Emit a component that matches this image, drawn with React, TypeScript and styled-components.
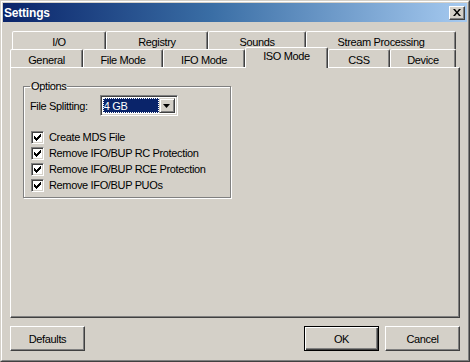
import React from 'react'
import styled, { createGlobalStyle } from 'styled-components'

const GlobalStyle = createGlobalStyle`
  html, body {
    margin: 0;
    padding: 0;
    background: #d4d0c8;
  }
  body {
    font-family: Tahoma, 'Liberation Sans', Arial, sans-serif;
    font-size: 11px;
    letter-spacing: -0.35px;
    color: #000;
  }
`

const backTabs = [
  { label: 'I/O', width: 94 },
  { label: 'Registry', width: 102 },
  { label: 'Sounds', width: 98 },
  { label: 'Stream Processing', width: 150 },
]

const frontTabs = [
  { label: 'General', width: 73 },
  { label: 'File Mode', width: 80 },
  { label: 'IFO Mode', width: 82 },
  { label: 'ISO Mode', width: 83, active: true },
  { label: 'CSS', width: 62 },
  { label: 'Device', width: 66 },
]

const options = [
  'Create MDS File',
  'Remove IFO/BUP RC Protection',
  'Remove IFO/BUP RCE Protection',
  'Remove IFO/BUP PUOs',
]

const Window = styled.div`
  width: 470px;
  height: 362px;
  box-sizing: border-box;
  border: 1px solid;
  border-color: #d4d0c8 #404040 #404040 #d4d0c8;
  background: #d4d0c8;
  display: flex;
  flex-direction: column;
`

const Frame = styled.div`
  flex: 1;
  display: flex;
  flex-direction: column;
  border: 1px solid;
  border-color: #fff #808080 #808080 #fff;
  padding: 1px;
`

const TitleBar = styled.div`
  height: 19px;
  display: flex;
  align-items: center;
  justify-content: space-between;
  padding: 0 2px 0 1px;
  background: linear-gradient(to right, #0a246a 0%, #3a6ea5 45%, #a6caf0 100%);
`

const Title = styled.span`
  color: #fff;
  font-weight: bold;
  font-size: 12px;
  font-family: Tahoma, 'Liberation Sans', sans-serif;
  letter-spacing: -0.2px;
`

const CloseButton = styled.div`
  width: 16px;
  height: 14px;
  box-sizing: border-box;
  background: #d4d0c8;
  border: 1px solid;
  border-color: #fff #404040 #404040 #fff;
  box-shadow: inset -1px -1px 0 #808080;
  display: flex;
  align-items: center;
  justify-content: center;
`

const Body = styled.div`
  flex: 1;
  display: flex;
  flex-direction: column;
  padding: 9px 7px 0 7px;
`

const TabStrip = styled.div`
  display: flex;
  flex-direction: column;
  position: relative;
  z-index: 1;
`

const TabRow = styled.div<{ $indent: number }>`
  display: flex;
  height: 18px;
  padding-left: ${p => p.$indent}px;
`

const Tab = styled.div<{ $width: number; $active?: boolean }>`
  width: ${p => p.$width}px;
  box-sizing: border-box;
  height: ${p => (p.$active ? 21 : 18)}px;
  margin-top: ${p => (p.$active ? -2 : 0)}px;
  border: 1px solid;
  border-bottom: none;
  border-color: #fff #404040 transparent #fff;
  border-radius: 2px 2px 0 0;
  box-shadow: inset -1px 0 0 #808080;
  background: #d4d0c8;
  display: flex;
  align-items: ${p => (p.$active ? 'flex-start' : 'center')};
  padding-top: ${p => (p.$active ? 2 : 2)}px;
  justify-content: center;
  position: relative;
  z-index: ${p => (p.$active ? 2 : 0)};
`

const Panel = styled.div`
  height: 251px;
  box-sizing: border-box;
  border: 1px solid;
  border-color: #fff #404040 #404040 #fff;
  box-shadow: inset -1px -1px 0 #808080;
  padding: 12px 12px;
`

const GroupBox = styled.fieldset`
  width: 208px;
  height: 118px;
  box-sizing: border-box;
  margin: 0;
  padding: 3px 6px 0 6px;
  border: 1px solid #808080;
  box-shadow: 1px 1px 0 #fff, inset 1px 1px 0 #fff;
  border-radius: 0;
`

const Legend = styled.legend`
  padding: 0 1px;
  margin-left: 0;
`

const ComboRow = styled.div`
  display: flex;
  align-items: center;
  gap: 12px;
  margin-bottom: 13px;
`

const Combo = styled.div`
  width: 78px;
  height: 21px;
  box-sizing: border-box;
  border: 1px solid;
  border-color: #808080 #fff #fff #808080;
  box-shadow: inset 1px 1px 0 #404040, inset -1px -1px 0 #d4d0c8;
  background: #fff;
  display: flex;
  padding: 2px;
`

const ComboValue = styled.div`
  flex: 1;
  background: #0a246a;
  color: #fff;
  outline: 1px dotted #fff;
  outline-offset: -1px;
  padding-left: 1px;
  display: flex;
  align-items: center;
`

const ComboArrow = styled.div`
  width: 16px;
  box-sizing: border-box;
  background: #d4d0c8;
  border: 1px solid;
  border-color: #d4d0c8 #404040 #404040 #d4d0c8;
  box-shadow: inset 1px 1px 0 #fff, inset -1px -1px 0 #808080;
  display: flex;
  align-items: center;
  justify-content: center;
`

const CheckRow = styled.label`
  display: flex;
  align-items: center;
  gap: 5px;
  height: 16px;
  margin-left: 1px;
`

const CheckBox = styled.div`
  width: 13px;
  height: 13px;
  box-sizing: border-box;
  border: 1px solid;
  border-color: #808080 #fff #fff #808080;
  box-shadow: inset 1px 1px 0 #404040, inset -1px -1px 0 #d4d0c8;
  background: #fff;
  display: flex;
  align-items: center;
  justify-content: center;
`

const ButtonBar = styled.div`
  display: flex;
  align-items: center;
  margin-top: 8px;
  gap: 6px;
`

const Spacer = styled.div`
  flex: 1;
`

const Button = styled.div<{ $default?: boolean }>`
  width: 75px;
  height: 25px;
  box-sizing: border-box;
  display: flex;
  align-items: center;
  justify-content: center;
  border: 1px solid;
  border-color: ${p => (p.$default ? '#000' : '#fff #404040 #404040 #fff')};
  box-shadow: ${p =>
    p.$default
      ? 'inset 1px 1px 0 #fff, inset -1px -1px 0 #404040, inset -2px -2px 0 #808080'
      : 'inset -1px -1px 0 #808080'};
  background: #d4d0c8;
`

const Check = () => (
  <svg width="7" height="7" viewBox="0 0 7 7">
    <path d="M0 2h1v1h1v1h1v-1h1v-1h1v-1h1v-1h1v3h-1v1h-1v1h-1v1h-1v1h-1v-1h-1v-1h-1v-1h-1z" fill="#000" />
  </svg>
)

const Arrow = () => (
  <svg width="7" height="4" viewBox="0 0 7 4">
    <path d="M0 0h7L3.5 4z" fill="#000" />
  </svg>
)

const CloseGlyph = () => (
  <svg width="8" height="7" viewBox="0 0 8 7">
    <path d="M0 0h2l2 2.5L6 0h2L5 3.5 8 7H6L4 4.5 2 7H0l3-3.5z" fill="#000" />
  </svg>
)

export default function App() {
  return (
    <>
      <GlobalStyle />
      <Window>
        <Frame>
          <TitleBar>
            <Title>Settings</Title>
            <CloseButton>
              <CloseGlyph />
            </CloseButton>
          </TitleBar>
          <Body>
            <TabStrip>
              <TabRow $indent={2}>
                {backTabs.map(t => (
                  <Tab key={t.label} $width={t.width}>
                    {t.label}
                  </Tab>
                ))}
              </TabRow>
              <TabRow $indent={0}>
                {frontTabs.map(t => (
                  <Tab key={t.label} $width={t.width} $active={t.active}>
                    {t.label}
                  </Tab>
                ))}
              </TabRow>
            </TabStrip>
            <Panel>
              <GroupBox>
                <Legend>Options</Legend>
                <ComboRow>
                  <span>File Splitting:</span>
                  <Combo>
                    <ComboValue>4 GB</ComboValue>
                    <ComboArrow>
                      <Arrow />
                    </ComboArrow>
                  </Combo>
                </ComboRow>
                {options.map(o => (
                  <CheckRow key={o}>
                    <CheckBox>
                      <Check />
                    </CheckBox>
                    {o}
                  </CheckRow>
                ))}
              </GroupBox>
            </Panel>
            <ButtonBar>
              <Button>Defaults</Button>
              <Spacer />
              <Button $default>OK</Button>
              <Button>Cancel</Button>
            </ButtonBar>
          </Body>
        </Frame>
      </Window>
    </>
  )
}
